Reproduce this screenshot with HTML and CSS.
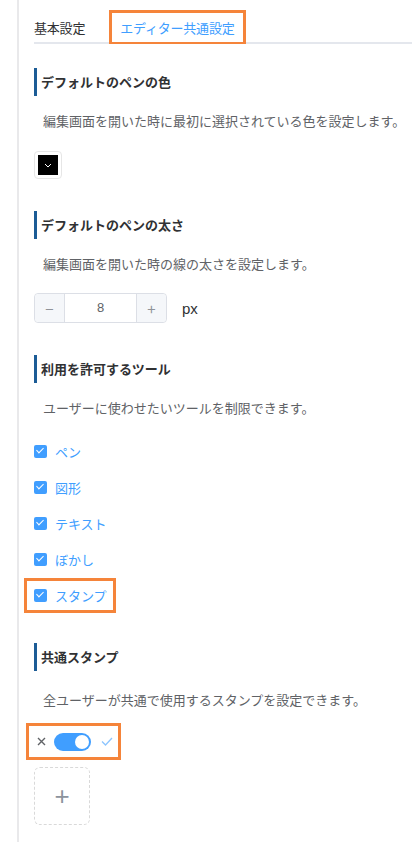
FILE: index.html
```html
<!DOCTYPE html>
<html lang="ja">
<head>
    <meta charset="UTF-8">
    <meta name="viewport" content="width=device-width, initial-scale=1.0">
    <title>エディター共通設定</title>
    <link rel="stylesheet" href="styles.css">
</head>
<body>

<div class="page">
    <div class="tabs">
        <div class="tab">基本設定</div>
        <div class="tab active mark">エディター共通設定</div>
    </div>

    <div class="section">
        <h3 class="title">デフォルトのペンの色</h3>
        <p class="desc">編集画面を開いた時に最初に選択されている色を設定します。</p>
        <div class="swatch">
            <span class="swatch-color">
                <svg width="8" height="5" viewBox="0 0 8 5"><path d="M1 1l3 3 3-3" fill="none" stroke="#fff" stroke-width="1"/></svg>
            </span>
        </div>
    </div>

    <div class="section">
        <h3 class="title">デフォルトのペンの太さ</h3>
        <p class="desc">編集画面を開いた時の線の太さを設定します。</p>
        <div class="number-row">
            <div class="number">
                <span class="num-btn">−</span>
                <span class="num-val">8</span>
                <span class="num-btn">+</span>
            </div>
            <span class="unit">px</span>
        </div>
    </div>

    <div class="section">
        <h3 class="title">利用を許可するツール</h3>
        <p class="desc">ユーザーに使わせたいツールを制限できます。</p>
        <ul class="tools">
            <li class="tool"><span class="check"></span>ペン</li>
            <li class="tool"><span class="check"></span>図形</li>
            <li class="tool"><span class="check"></span>テキスト</li>
            <li class="tool"><span class="check"></span>ぼかし</li>
            <li class="tool"><span class="tool-mark mark"><span class="check"></span>スタンプ</span></li>
        </ul>
    </div>

    <div class="section last">
        <h3 class="title">共通スタンプ</h3>
        <p class="desc">全ユーザーが共通で使用するスタンプを設定できます。</p>
        <div class="switch-row mark">
            <svg class="sw-x" width="9" height="9" viewBox="0 0 9 9"><path d="M1 1l7 7M8 1l-7 7" stroke="#606266" stroke-width="1.4"/></svg>
            <span class="switch"><span class="knob"></span></span>
            <svg class="sw-ok" width="12" height="9" viewBox="0 0 12 9"><path d="M1 4.5l3.5 3.5 6.5-7" fill="none" stroke="#8cc5ff" stroke-width="1.3"/></svg>
        </div>
        <div class="upload">+</div>
    </div>
</div>

</body>
</html>
```

FILE: styles.css
```css
body { margin: 0; font-family: "Noto Sans CJK JP", "Noto Sans", sans-serif; color: #303133; background: #fff; }
.page { margin-left: 17px; border-left: 2px solid #e9e9eb; padding: 10px 0 20px 15px; min-height: 812px; }

.mark { border: 3px solid #f5843a; }

.tabs { display: flex; align-items: flex-end; border-bottom: 2px solid #e4e7ed; }
.tab { font-size: 13px; line-height: 29px; color: #303133; padding-right: 24px; letter-spacing: -0.2px; }
.tab.active { color: #409eff; padding: 0 8px; border-bottom-width: 2px; margin-bottom: -2px; }

.section { margin-top: 24px; }
.section + .section { margin-top: 32px; }
.title { margin: 0; font-size: 13px; font-weight: bold; line-height: 28px; border-left: 3px solid #1c5c96; padding-left: 4px; }
.desc { margin: 15px 0 0; font-size: 13px; line-height: 20px; color: #606266; padding-left: 9px; }

.swatch { margin-top: 20px; width: 20px; height: 20px; padding: 3px; border: 1px solid #e6e6e6; border-radius: 4px; }
.swatch-color { display: flex; width: 20px; height: 20px; background: #000; align-items: center; justify-content: center; }

.number-row { margin-top: 19px; display: flex; align-items: center; gap: 15px; }
.number { display: flex; width: 133px; height: 30px; border: 1px solid #dcdfe6; border-radius: 4px; box-sizing: border-box; }
.num-btn { width: 29px; background: #f5f7fa; color: #909399; font-size: 15px; display: flex; align-items: center; justify-content: center; }
.num-btn:first-child { border-right: 1px solid #dcdfe6; border-radius: 4px 0 0 4px; }
.num-btn:last-child { border-left: 1px solid #dcdfe6; border-radius: 0 4px 4px 0; }
.num-val { flex: 1; text-align: center; font-family: "Liberation Sans", sans-serif; font-size: 13px; line-height: 28px; color: #606266; }
.unit { font-family: "Liberation Sans", sans-serif; font-size: 15px; color: #303133; }

.tools { list-style: none; margin: 15px 0 0; padding: 0; }
.tool { display: flex; align-items: center; height: 36px; font-size: 13px; color: #409eff; }
.tool-mark { display: flex; align-items: center; margin-left: -10px; padding: 5px 6px 5px 7px; }
.check { position: relative; width: 13px; height: 13px; border-radius: 2px; background: #409eff; margin-right: 8px; }
.check::after { content: ""; position: absolute; left: 4px; top: 1.5px; width: 3px; height: 6px; border: solid #fff; border-width: 0 1.5px 1.5px 0; transform: rotate(45deg); }

.section.last { margin-top: 30px; }
.section.last .desc { margin-top: 19px; }
.switch-row { margin-top: 13px; margin-left: -8px; width: 82px; height: 31px; display: flex; align-items: center; padding-left: 7px; }
.sw-x { margin-left: 1px; }
.switch { position: relative; width: 37px; height: 18px; border-radius: 9px; background: #409eff; margin-left: 8px; }
.knob { position: absolute; right: 2px; top: 2px; width: 14px; height: 14px; border-radius: 50%; background: #fff; }
.sw-ok { margin-left: 10px; }
.upload { margin-top: 7px; width: 56px; height: 58px; box-sizing: border-box; border: 1px dashed #d9d9d9; border-radius: 6px; display: flex; align-items: center; justify-content: center; font-size: 26px; font-weight: 300; color: #8c939d; font-family: "Liberation Sans", sans-serif; }
```
